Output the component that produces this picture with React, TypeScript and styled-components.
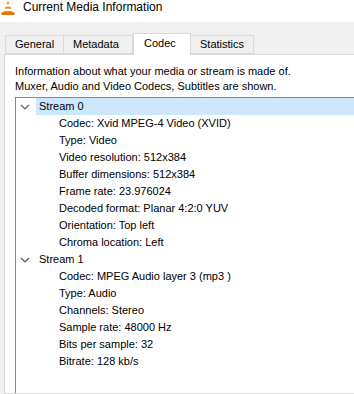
import React from 'react'
import styled, { createGlobalStyle } from 'styled-components'

const GlobalStyle = createGlobalStyle`
  html, body {
    margin: 0;
    padding: 0;
    background: #f0f0f0;
    overflow: hidden;
  }
  body {
    font-family: 'Liberation Sans', Arial, sans-serif;
    font-size: 11px;
    color: #000;
  }
`

const Window = styled.div`
  width: 354px;
  height: 394px;
  display: flex;
  flex-direction: column;
  overflow: hidden;
`
const TitleBar = styled.div`
  height: 22px;
  flex: none;
  background: #fff;
  display: flex;
  align-items: flex-start;
  gap: 8px;
  padding-left: 1px;
  box-sizing: border-box;
`
const TitleText = styled.span`
  line-height: 14px;
  font-size: 12px;
`
const TabRow = styled.div`
  display: flex;
  align-items: flex-end;
  height: 32px;
  padding-left: 5px;
  flex: none;
  position: relative;
  z-index: 2;
`
const Tab = styled.div<{ $active?: boolean; $first?: boolean; $w: number }>`
  width: ${p => p.$w}px;
  box-sizing: border-box;
  height: ${p => (p.$active ? 22 : 19)}px;
  margin-bottom: ${p => (p.$active ? -1 : 0)}px;
  background: ${p => (p.$active ? '#fff' : '#f0f0f0')};
  border: 1px solid #d9d9d9;
  border-bottom: ${p => (p.$active ? 'none' : '1px solid #d9d9d9')};
  border-left: ${p => (p.$first || p.$active ? '1px solid #d9d9d9' : 'none')};
  padding-left: ${p => (p.$active ? 10 : 9)}px;
  line-height: ${p => (p.$active ? 19 : 17)}px;
  white-space: nowrap;
`
const Panel = styled.div`
  flex: 1;
  margin-left: 4px;
  margin-right: -10px;
  background: #fff;
  border: 1px solid #d9d9d9;
  padding: 9px 0 0 10px;
  box-sizing: border-box;
  display: flex;
  flex-direction: column;
`
const Description = styled.p`
  margin: 0 0 3px 0;
  line-height: 15px;
`
const TreeBox = styled.div`
  flex: 1;
  border-left: 1px solid #828790;
  border-top: 1px solid #828790;
`
const Row = styled.div<{ $level: number }>`
  height: 17px;
  line-height: 17px;
  display: flex;
  align-items: center;
  padding-left: ${p => (p.$level === 0 ? 4 : 40)}px;
  white-space: nowrap;
`
const Expander = styled.span`
  width: 10px;
  height: 17px;
  margin-right: 6px;
  display: flex;
  align-items: center;
  justify-content: center;
  flex: none;
`
const Label = styled.span<{ $selected?: boolean }>`
  background: ${p => (p.$selected ? '#cce8ff' : 'transparent')};
  padding-left: 3px;
  flex: ${p => (p.$selected ? 1 : 'none')};
  height: 17px;
`

function Cone() {
  return (
    <svg width="14" height="16" viewBox="0 0 14 16">
      <path d="M7 0.5 L11.6 13 H2.4 Z" fill="#f48a0c" />
      <path d="M5.7 4 H8.3 L9.3 6.8 H4.7 Z" fill="#fff" />
      <path d="M4 8.7 H10 L10.8 11 H3.2 Z" fill="#fff" />
      <rect x="0.5" y="12.2" width="13" height="2.8" rx="0.6" fill="#e07608" />
    </svg>
  )
}

function Chevron() {
  return (
    <svg width="10" height="6" viewBox="0 0 10 6">
      <polyline points="1,1 5,5 9,1" fill="none" stroke="#595959" strokeWidth="1.2" />
    </svg>
  )
}

type Stream = { name: string; props: string[] }

const streams: Stream[] = [
  {
    name: 'Stream 0',
    props: [
      'Codec: Xvid MPEG-4 Video (XVID)',
      'Type: Video',
      'Video resolution: 512x384',
      'Buffer dimensions: 512x384',
      'Frame rate: 23.976024',
      'Decoded format: Planar 4:2:0 YUV',
      'Orientation: Top left',
      'Chroma location: Left',
    ],
  },
  {
    name: 'Stream 1',
    props: [
      'Codec: MPEG Audio layer 3 (mp3 )',
      'Type: Audio',
      'Channels: Stereo',
      'Sample rate: 48000 Hz',
      'Bits per sample: 32',
      'Bitrate: 128 kb/s',
    ],
  },
]

const tabs = [
  { name: 'General', w: 59 },
  { name: 'Metadata', w: 69 },
  { name: 'Codec', w: 58 },
  { name: 'Statistics', w: 63 },
]

export default function App() {
  return (
    <Window>
      <GlobalStyle />
      <TitleBar>
        <Cone />
        <TitleText>Current Media Information</TitleText>
      </TitleBar>
      <TabRow>
        {tabs.map((t, i) => (
          <Tab key={t.name} $w={t.w} $active={t.name === 'Codec'} $first={i === 0}>
            {t.name}
          </Tab>
        ))}
      </TabRow>
      <Panel>
        <Description>
          Information about what your media or stream is made of.
          <br />
          Muxer, Audio and Video Codecs, Subtitles are shown.
        </Description>
        <TreeBox>
          {streams.map((s, si) => (
            <React.Fragment key={s.name}>
              <Row $level={0}>
                <Expander>
                  <Chevron />
                </Expander>
                <Label $selected={si === 0}>{s.name}</Label>
              </Row>
              {s.props.map(p => (
                <Row key={p} $level={1}>
                  <Label>{p}</Label>
                </Row>
              ))}
            </React.Fragment>
          ))}
        </TreeBox>
      </Panel>
    </Window>
  )
}
